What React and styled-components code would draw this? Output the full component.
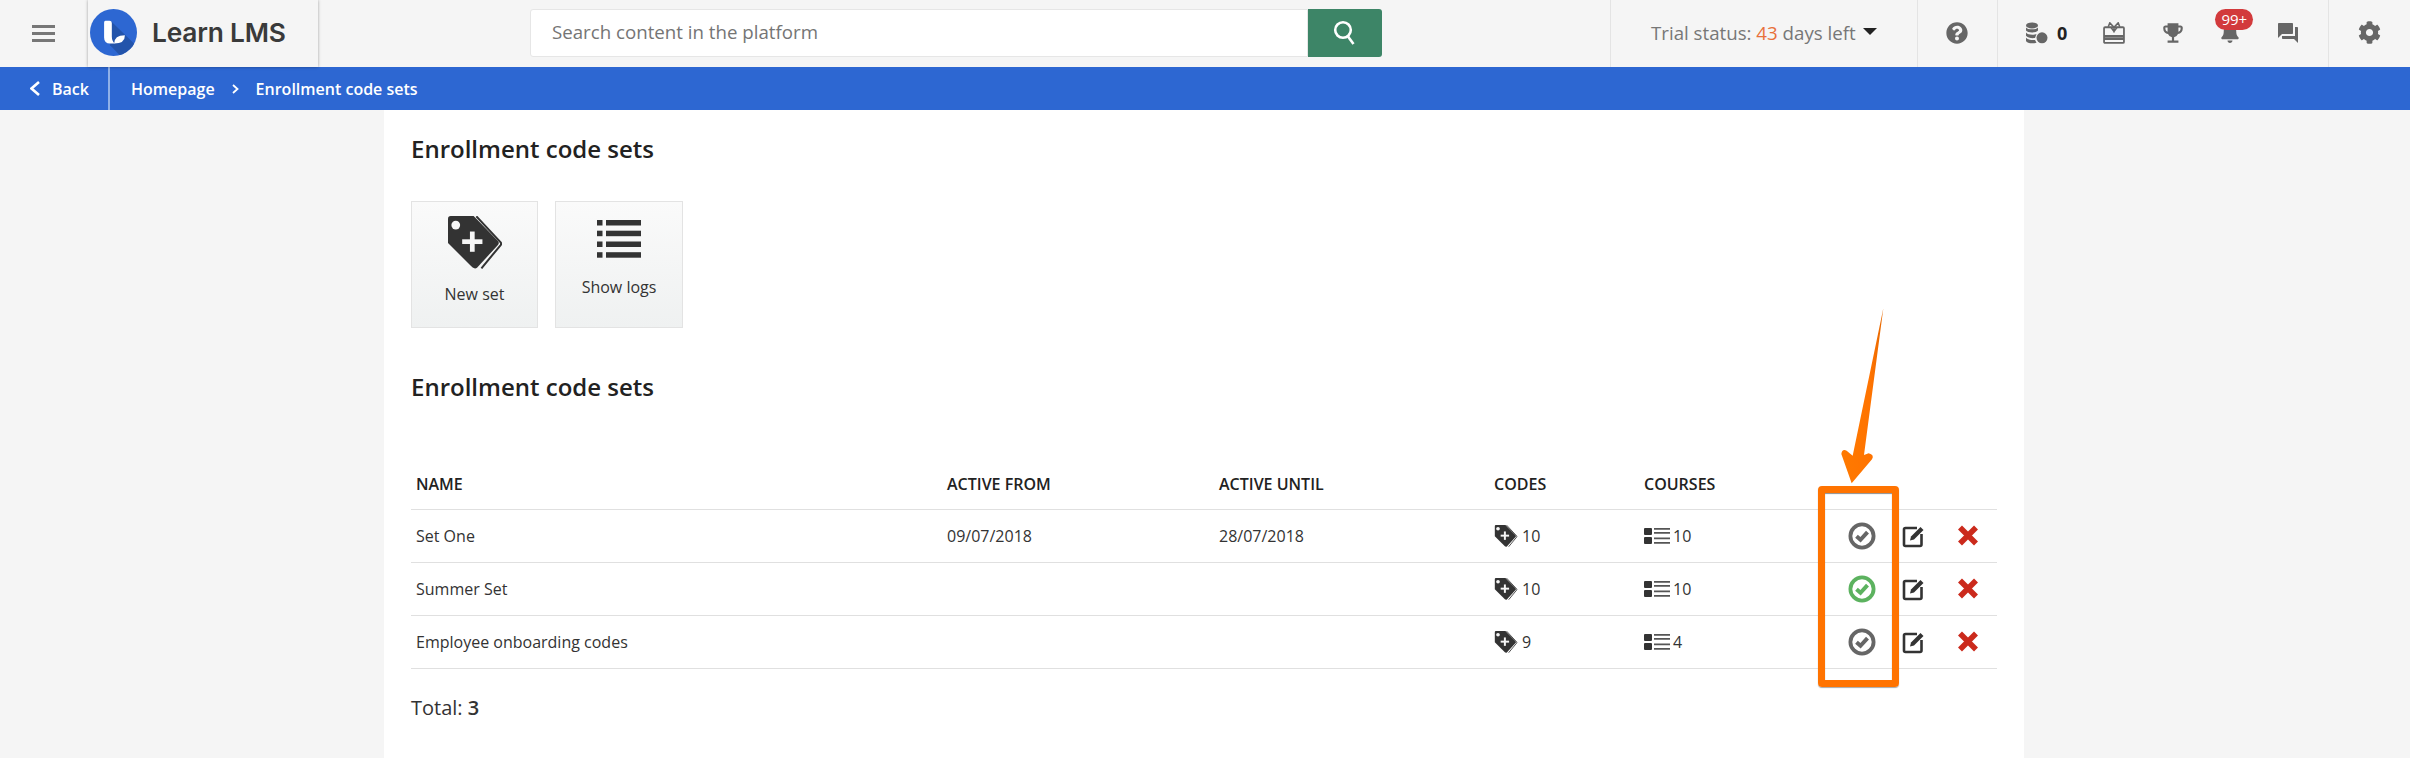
import React from "react";
import styled, { createGlobalStyle } from "styled-components";
import { FaQuestionCircle, FaCog, FaBell } from "react-icons/fa";
import { MdEmojiEvents, MdForum } from "react-icons/md";

const Global = createGlobalStyle`
  html, body { margin: 0; padding: 0; height: 758px; overflow: hidden; background: #f5f5f5; }
  body { font-family: "Open Sans", "Liberation Sans", sans-serif; color: #333; }
  * { box-sizing: border-box; }
`;

const Page = styled.div`
  width: 2410px;
  height: 758px;
  position: relative;
  overflow: hidden;
`;

/* ---------- top bar ---------- */
const TopBar = styled.header`
  display: flex;
  height: 67px;
  background: #f5f5f5;
`;
const MenuButton = styled.div`
  width: 88px;
  padding: 25px 0 0 32px;
  display: flex;
  flex-direction: column;
  gap: 4px;
`;
const MenuLine = styled.span`
  width: 23px;
  height: 3px;
  background: #777;
`;
const LogoBox = styled.div`
  width: 230px;
  height: 67px;
  display: flex;
  align-items: center;
  padding: 0 0 2px 2px;
  gap: 15px;
  background: #f5f5f5;
  box-shadow: 0 0 3px rgba(0, 0, 0, 0.35);
  position: relative;
  z-index: 2;
`;
const LogoText = styled.span`
  font-family: Inter, "Liberation Sans", sans-serif;
  font-weight: 600;
  font-size: 26.3px;
  letter-spacing: -0.2px;
  color: #3a3a3a;
`;
const Search = styled.div`
  display: flex;
  width: 852px;
  height: 48px;
  margin: 9px 0 0 212px;
`;
const SearchField = styled.div`
  flex: 1;
  background: #fff;
  border: 1px solid #e6e6e6;
  border-radius: 3px 0 0 3px;
  padding-left: 21px;
  font-size: 18.7px;
  line-height: 44px;
  color: #757575;
`;
const SearchButton = styled.div`
  width: 74px;
  background: #3d8567;
  border-radius: 0 3px 3px 0;
  display: flex;
  align-items: center;
  justify-content: center;
`;
const BarSection = styled.div`
  height: 67px;
  width: ${(p) => p.$w}px;
  margin-left: ${(p) => p.$ml || 0}px;
  border-left: 1px solid #e4e4e4;
  padding-left: ${(p) => p.$pad}px;
  display: flex;
  align-items: center;
  padding-bottom: 2px;
  color: #666;
`;
const TrialText = styled.span`
  font-size: 18.7px;
  color: #777;
`;
const TrialDays = styled.span`
  color: #e8703a;
`;
const Caret = styled.span`
  width: 0;
  height: 0;
  margin: 0 0 2px 7px;
  border-left: 7px solid transparent;
  border-right: 7px solid transparent;
  border-top: 7px solid #222;
`;
const ToolGroup = styled.div`
  display: flex;
  align-items: center;
  color: #666;
  margin-left: ${(p) => p.$ml || 0}px;
  position: relative;
`;
const CoinCount = styled.span`
  font-size: 18px;
  font-weight: 700;
  color: #222;
  margin-left: 9px;
`;
const Badge = styled.span`
  position: absolute;
  left: -5px;
  top: -14px;
  width: 38px;
  height: 21px;
  border-radius: 11px;
  background: #d23a3c;
  color: #fff;
  font-size: 15px;
  line-height: 21px;
  text-align: center;
`;

/* ---------- breadcrumb ---------- */
const Crumbs = styled.nav`
  display: flex;
  align-items: center;
  height: 43px;
  background: #2d67d2;
  color: #fff;
  font-size: 16px;
  font-weight: 600;
`;
const BackLink = styled.div`
  width: 110px;
  height: 43px;
  padding-left: 30px;
  display: flex;
  align-items: center;
  gap: 12px;
  border-right: 2px solid #8fb0e8;
`;
const CrumbTrail = styled.div`
  display: flex;
  align-items: center;
  padding-left: 21px;
  gap: 17px;
`;

/* ---------- content ---------- */
const Content = styled.main`
  width: 1640px;
  height: 648px;
  margin-left: 384px;
  background: #fff;
  padding: 22px 27px 0;
`;
const Title = styled.h2`
  margin: ${(p) => p.$mt || 0}px 0 0;
  font-size: 24px;
  line-height: 34px;
  font-weight: 600;
  color: #222;
`;
const Buttons = styled.div`
  display: flex;
  gap: 17px;
  margin-top: 35px;
`;
const ActionButton = styled.div`
  width: ${(p) => p.$w}px;
  height: 127px;
  padding-top: ${(p) => p.$top}px;
  display: flex;
  flex-direction: column;
  align-items: center;
  gap: ${(p) => p.$gap}px;
  background: linear-gradient(#fafafa, #eff1f1);
  border: 1px solid #e3e3e3;
  font-size: 16px;
  line-height: 22px;
  color: #333;
`;
const Table = styled.table`
  width: 1586px;
  margin-top: 52px;
  table-layout: fixed;
  border-collapse: collapse;
`;
const Th = styled.th`
  width: ${(p) => (p.$w ? `${p.$w}px` : "auto")};
  height: 53px;
  padding: 4px 0 0 5px;
  border-bottom: 1px solid #e0e0e0;
  font-size: 16px;
  font-weight: 600;
  text-align: left;
  color: #222;
`;
const Td = styled.td`
  height: 53px;
  padding: 0 0 0 5px;
  border-bottom: 1px solid #e0e0e0;
  font-size: 16px;
  color: #333;
`;
const CountCell = styled.div`
  display: flex;
  align-items: center;
  gap: ${(p) => p.$gap}px;
`;
const Actions = styled.div`
  display: flex;
  margin-left: -5px;
`;
const ActionSlot = styled.span`
  width: 52px;
  display: flex;
  justify-content: center;
  align-items: center;
  margin-right: ${(p) => p.$mr || 0}px;
`;
const Total = styled.p`
  margin: 26px 0 0;
  font-size: 20px;
  line-height: 26px;
  color: #333;
`;
const TotalValue = styled.b`
  font-weight: 600;
`;

/* ---------- annotation over the page ---------- */
const Highlight = styled.div`
  position: absolute;
  left: 1818px;
  top: 486px;
  width: 81px;
  height: 201px;
  border: 7.5px solid #ff7300;
  border-radius: 4px;
  box-shadow: 0 1px 1px rgba(0, 0, 0, 0.35), inset 0 1px 1px rgba(0, 0, 0, 0.45);
`;
const ArrowSvg = styled.svg`
  position: absolute;
  left: 1780px;
  top: 290px;
`;

/* ---------- drawings ---------- */
const Logo = () => (
  <svg width="47" height="47" viewBox="0 0 140 140">
    <defs>
      <clipPath id="lc"><circle cx="70" cy="70" r="70" /></clipPath>
    </defs>
    <circle cx="70" cy="70" r="70" fill="#2d67d2" />
    <path clipPath="url(#lc)" d="M62 36 L118 90 L150 122 L110 160 L60 108 Z" fill="#2354ab" />
    <path d="M46 35 H58 Q65 35 65 42 V82 Q65 96 74 103 H60 Q42 103 42 85 V40 Q42 35 46 35 Z" fill="#fff" />
    <path d="M72 103 Q72 78 104 78 Q104 103 72 103 Z" fill="#fff" />
  </svg>
);
const SearchIcon = () => (
  <svg width="26" height="26" viewBox="0 0 26 26" fill="none" stroke="#fff" strokeWidth="2.6">
    <circle cx="11" cy="10" r="7.8" />
    <path d="M16 16.5 L21.5 24" />
  </svg>
);
const Coins = () => (
  <svg width="23" height="22" viewBox="0 0 22 22" fill="#666">
    <ellipse cx="6.5" cy="3.4" rx="6" ry="3" />
    <path d="M.5 5.4 C2 8 11 8 12.5 5.4 V8.6 C11 11.2 2 11.2 .5 8.6 Z" />
    <path d="M.5 10.6 C2 13.2 9 13.2 11 12 L9.5 16 C6 16.5 2 15.8 .5 13.8 Z" />
    <path d="M.5 15.8 C2 18 7 18.3 9.5 18 L11 20.8 C7 21.8 1.5 21.5 .5 19 Z" />
    <circle cx="16.5" cy="15.8" r="5.5" />
  </svg>
);
const Gift = () => (
  <svg width="22" height="22" viewBox="0 0 21 21" fill="none" stroke="#666">
    <path d="M2 5 H19 Q20 5 20 6 V19 Q20 20 19 20 H2 Q1 20 1 19 V6 Q1 5 2 5 Z" strokeWidth="1.7" />
    <path d="M1 13.5 H20 M1 16 H20" strokeWidth="2.2" />
    <path d="M10.5 5 L6.5 .8 L5 4.5 M10.5 5 L14.5 .8 L16 4.5 M10.5 5 V10 M7.5 5 L10.5 9 L13.5 5" strokeWidth="1.5" />
  </svg>
);
const TagIcon = ({ width, height }) => (
  <svg width={width} height={height} viewBox="0 0 160 157">
    <path d="M0 8 Q0 0 8 0 H76 L148 74 Q153 80 148 86 L86 153 Q80 158 72 152 L0 80 Z" fill="#333" />
    <circle cx="23" cy="27" r="13" fill="#f6f6f6" />
    <rect x="42" y="69" width="60" height="14" fill="#f6f6f6" />
    <rect x="65" y="46" width="14" height="60" fill="#f6f6f6" />
    <path d="M84 1 L156 78 Q159 82 156 86 L99 155" fill="none" stroke="#333" strokeWidth="6" />
  </svg>
);
const LogsIcon = () => (
  <svg width="44" height="38" viewBox="0 0 44 38" fill="#333">
    {[0, 10.7, 21.5, 32.2].map((y) => (
      <g key={y}>
        <rect x="0" y={y} width="5.5" height="5.5" />
        <rect x="9" y={y} width="35" height="5.5" />
      </g>
    ))}
  </svg>
);
const CourseIcon = () => (
  <svg width="26" height="16" viewBox="0 0 26 16" fill="#333">
    <rect x="0" y="0" width="8" height="7" rx="1" />
    <rect x="0" y="9" width="8" height="7" rx="1" />
    <path d="M10 .8 H26 M10 4.8 H26 M10 10.3 H26 M10 14.8 H26" stroke="#555" strokeWidth="1.7" />
  </svg>
);
const CheckRing = ({ color }) => (
  <svg width="28" height="28" viewBox="0 0 28 28" fill="none" stroke={color}>
    <circle cx="14" cy="14" r="11.6" strokeWidth="3.8" />
    <path d="M8.5 14.2 L12.5 17.8 L19.5 10.2" strokeWidth="4" />
  </svg>
);
const EditIcon = () => (
  <svg width="24" height="24" viewBox="0 0 24 24" fill="none">
    <path d="M15 4 H3.5 Q2 4 2 5.5 V20.5 Q2 22 3.5 22 H18 Q19.5 22 19.5 20.5 V10" stroke="#333" strokeWidth="2.6" />
    <path d="M8 16.5 L9 12.5 L18.5 3 L21.5 6 L12 15.5 Z" fill="#333" />
  </svg>
);
const CrossIcon = () => (
  <svg width="22" height="21" viewBox="0 0 22 21" fill="none" stroke="#cb2a1c" strokeWidth="5.6">
    <path d="M3 2.5 L19 18.5 M19 2.5 L3 18.5" />
  </svg>
);
const Chevron = ({ w, h, sw, left }) => (
  <svg width={w} height={h} viewBox={`0 0 ${w} ${h}`} fill="none" stroke="#fff" strokeWidth={sw}>
    <path d={left ? `M${w - 1} 1 L1.5 ${h / 2} L${w - 1} ${h - 1}` : `M1 1 L${w - 1.5} ${h / 2} L1 ${h - 1}`} />
  </svg>
);

const rows = [
  { name: "Set One", from: "09/07/2018", until: "28/07/2018", codes: 10, courses: 10, on: false },
  { name: "Summer Set", from: "", until: "", codes: 10, courses: 10, on: true },
  { name: "Employee onboarding codes", from: "", until: "", codes: 9, courses: 4, on: false },
];

export default function App() {
  return (
    <Page>
      <Global />
      <TopBar>
        <MenuButton>
          <MenuLine />
          <MenuLine />
          <MenuLine />
        </MenuButton>
        <LogoBox>
          <Logo />
          <LogoText>Learn LMS</LogoText>
        </LogoBox>
        <Search>
          <SearchField>Search content in the platform</SearchField>
          <SearchButton>
            <SearchIcon />
          </SearchButton>
        </Search>
        <BarSection $ml={228} $w={307} $pad={40}>
          <TrialText>
            Trial status: <TrialDays>43</TrialDays> days left
          </TrialText>
          <Caret />
        </BarSection>
        <BarSection $w={80} $pad={28}>
          <FaQuestionCircle size={22} color="#666" />
        </BarSection>
        <BarSection $w={331} $pad={27}>
          <ToolGroup>
            <Coins />
            <CoinCount>0</CoinCount>
          </ToolGroup>
          <ToolGroup $ml={36}>
            <Gift />
          </ToolGroup>
          <ToolGroup $ml={35}>
            <MdEmojiEvents size={26} />
          </ToolGroup>
          <ToolGroup $ml={34}>
            <FaBell size={20} />
            <Badge>99+</Badge>
          </ToolGroup>
          <ToolGroup $ml={36}>
            <MdForum size={24} />
          </ToolGroup>
        </BarSection>
        <BarSection $w={82} $pad={29}>
          <FaCog size={23} color="#666" />
        </BarSection>
      </TopBar>

      <Crumbs>
        <BackLink>
          <Chevron w={10} h={15} sw={2.6} left />
          Back
        </BackLink>
        <CrumbTrail>
          Homepage
          <Chevron w={7} h={10} sw={1.8} />
          Enrollment code sets
        </CrumbTrail>
      </Crumbs>

      <Content>
        <Title>Enrollment code sets</Title>
        <Buttons>
          <ActionButton $w={127} $top={14} $gap={14}>
            <TagIcon width={54} height={53} />
            New set
          </ActionButton>
          <ActionButton $w={128} $top={18} $gap={18}>
            <LogsIcon />
            Show logs
          </ActionButton>
        </Buttons>
        <Title $mt={42}>Enrollment code sets</Title>
        <Table>
          <thead>
            <tr>
              <Th $w={531}>NAME</Th>
              <Th $w={272}>ACTIVE FROM</Th>
              <Th $w={275}>ACTIVE UNTIL</Th>
              <Th $w={150}>CODES</Th>
              <Th $w={197}>COURSES</Th>
              <Th />
            </tr>
          </thead>
          <tbody>
            {rows.map((r) => (
              <tr key={r.name}>
                <Td>{r.name}</Td>
                <Td>{r.from}</Td>
                <Td>{r.until}</Td>
                <Td>
                  <CountCell $gap={4}>
                    <TagIcon width={24} height={22} />
                    {r.codes}
                  </CountCell>
                </Td>
                <Td>
                  <CountCell $gap={3}>
                    <CourseIcon />
                    {r.courses}
                  </CountCell>
                </Td>
                <Td>
                  <Actions>
                    <ActionSlot>
                      <CheckRing color={r.on ? "#5cb25f" : "#666"} />
                    </ActionSlot>
                    <ActionSlot $mr={2}>
                      <EditIcon />
                    </ActionSlot>
                    <ActionSlot>
                      <CrossIcon />
                    </ActionSlot>
                  </Actions>
                </Td>
              </tr>
            ))}
          </tbody>
        </Table>
        <Total>
          Total: <TotalValue>3</TotalValue>
        </Total>
      </Content>

      <Highlight />
      <ArrowSvg width="110" height="200" viewBox="0 0 330 600">
        <defs>
          <linearGradient id="arrowFill" x1="0" x2="1" y1="0" y2="0">
            <stop offset="0" stopColor="#ff7a00" />
            <stop offset="0.7" stopColor="#ff7300" />
            <stop offset="1" stopColor="#e56700" />
          </linearGradient>
        </defs>
        <path
          d="M310 55 L252 495 L266 490 Q284 495 276 508 L215 580 L184 492 Q186 476 200 482 L218 497 Z"
          fill="url(#arrowFill)"
        />
      </ArrowSvg>
    </Page>
  );
}
